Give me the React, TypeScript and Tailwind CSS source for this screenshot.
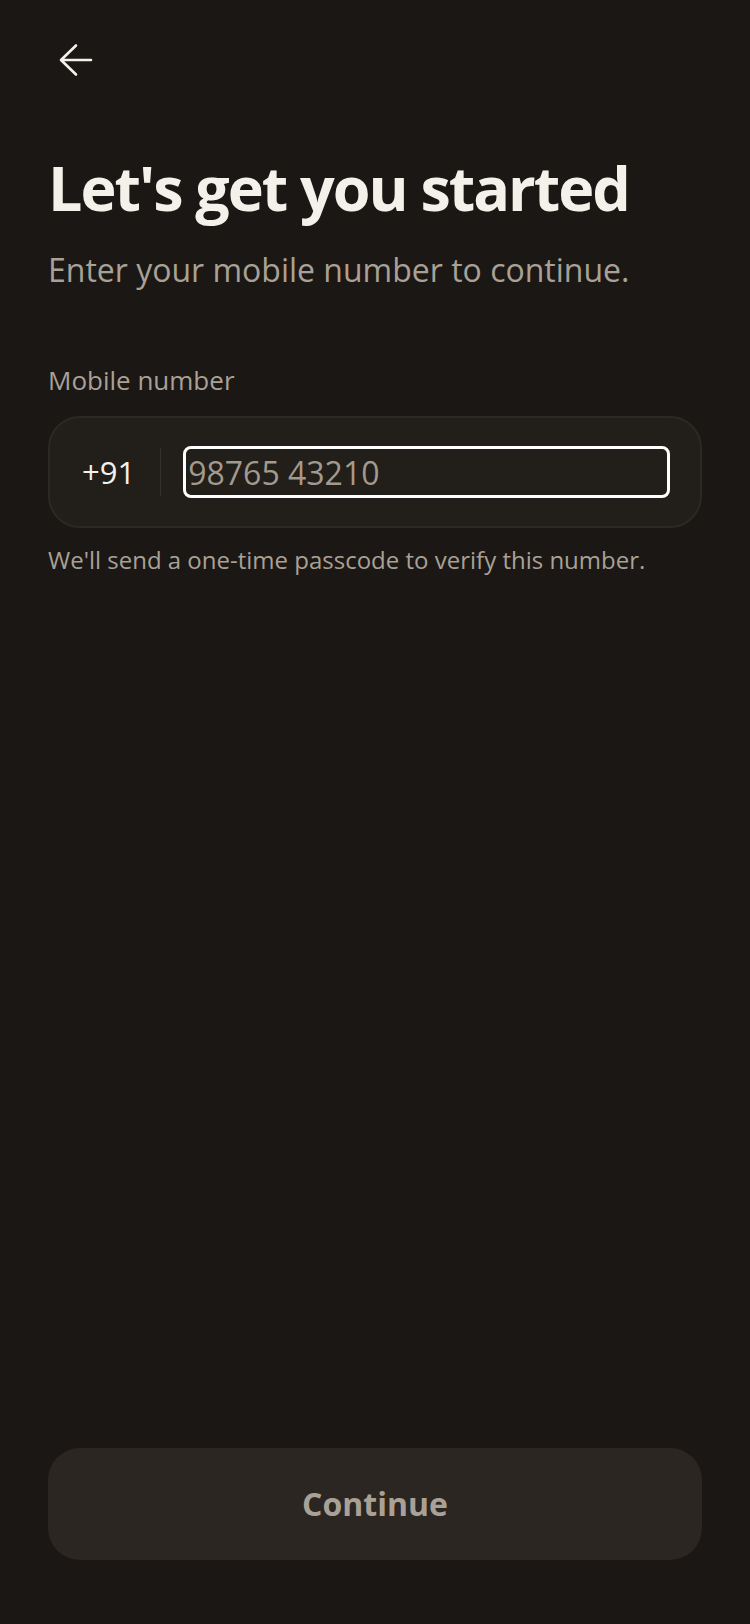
import { useState } from "react";

export default function App() {
  const [phone, setPhone] = useState("");

  return (
    <div
      className="flex min-h-screen flex-col bg-[#1b1714] px-12 pb-16 pt-8 text-[#f4f0ea]"
      style={{ fontFamily: '"Open Sans", "Noto Sans", sans-serif' }}
    >
      <button
        type="button"
        aria-label="Back"
        className="flex h-14 w-14 items-center justify-center text-[#f4f0ea]"
      >
        <svg width="34" height="34" viewBox="0 0 34 34" fill="none">
          <path
            d="M32 17H2M17 2.5 2 17l15 14.5"
            stroke="currentColor"
            strokeWidth="2.6"
            strokeLinecap="round"
            strokeLinejoin="round"
          />
        </svg>
      </button>

      <h1 className="mt-[66px] text-[61px] font-bold leading-[1.1] tracking-[-0.033em]">
        Let's get you started
      </h1>
      <p className="mt-[28px] text-[32px] leading-[1.3] text-[#a9a196]">
        Enter your mobile number to continue.
      </p>

      <label htmlFor="phone" className="mt-[73px] text-[26px] leading-[1.3] text-[#a9a196]">
        Mobile number
      </label>

      <div className="mt-[19px] flex h-[112px] items-center rounded-[32px] border-2 border-[#2c2824] bg-[#221e1a] pl-[32px] pr-[30px]">
        <span className="text-[31px] text-[#f4f0ea]">+91</span>
        <span className="ml-[25px] mr-[22px] h-12 w-px bg-[#35302b]" />
        <input
          id="phone"
          type="tel"
          autoFocus
          value={phone}
          onChange={(e) => setPhone(e.target.value)}
          placeholder="98765 43210"
          className="h-[52px] min-w-0 flex-1 rounded-[8px] border-[3px] border-white bg-[#221e1a] px-0.5 text-[32px] text-[#f4f0ea] outline-none placeholder:text-[#a39a8e]"
        />
      </div>

      <p className="mt-[15px] text-[24px] leading-[1.4] text-[#a9a196]">
        We'll send a one-time passcode to verify this number.
      </p>

      <div className="flex-1" />

      <button
        type="button"
        className="h-[112px] w-full rounded-[32px] bg-[#2b2622] text-[32px] font-bold text-[#aaa196]"
      >
        Continue
      </button>
    </div>
  );
}
